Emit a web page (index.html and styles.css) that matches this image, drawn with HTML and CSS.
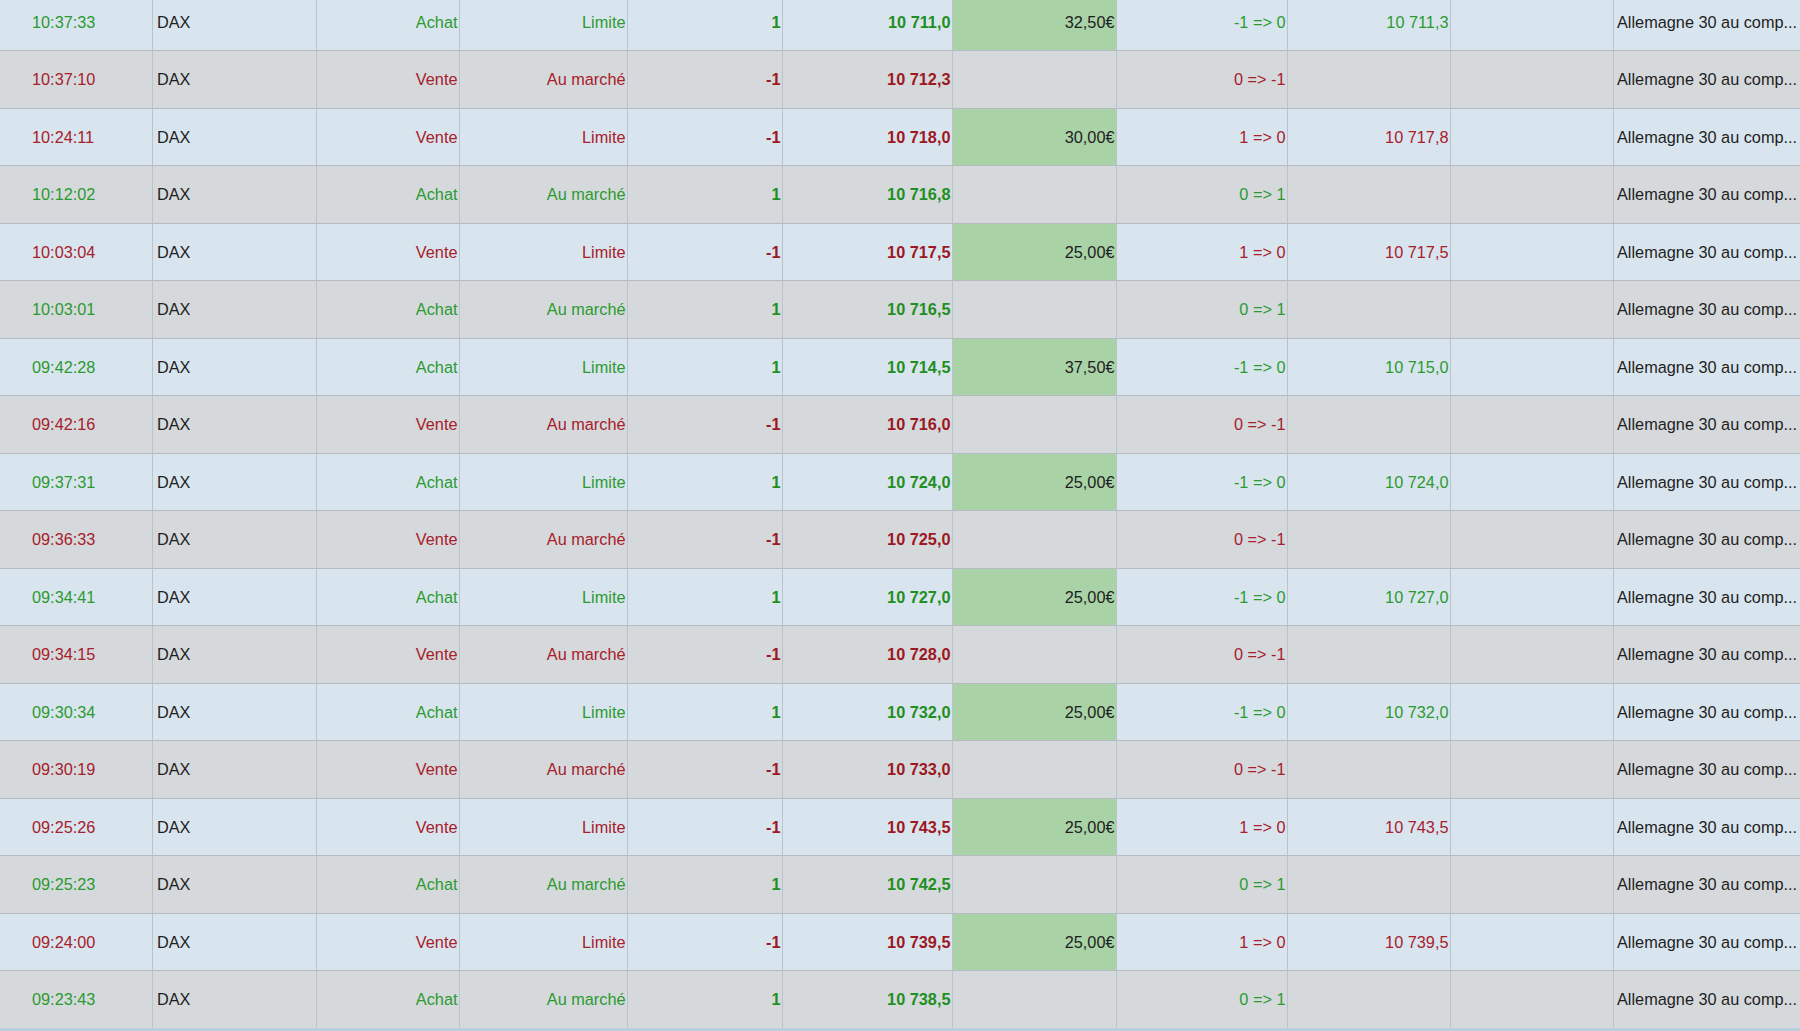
FILE: index.html
```html
<!DOCTYPE html>
<html lang="fr">
<head>
<meta charset="utf-8">
<title>Ordres DAX</title>
<link rel="stylesheet" href="styles.css">
</head>
<body>
<div class="sheet">
  <div class="grid">
    <div class="row buy"><div class="c time">10:37:33</div><div class="c sym">DAX</div><div class="c r">Achat</div><div class="c r">Limite</div><div class="c r b">1</div><div class="c r b">10 711,0</div><div class="c r pnl">32,50€</div><div class="c r">-1 =&gt; 0</div><div class="c r">10 711,3</div><div class="c"></div><div class="c desc">Allemagne 30 au comp...</div></div>
    <div class="row sell"><div class="c time">10:37:10</div><div class="c sym">DAX</div><div class="c r">Vente</div><div class="c r">Au marché</div><div class="c r b">-1</div><div class="c r b">10 712,3</div><div class="c r"></div><div class="c r">0 =&gt; -1</div><div class="c r"></div><div class="c"></div><div class="c desc">Allemagne 30 au comp...</div></div>
    <div class="row sell"><div class="c time">10:24:11</div><div class="c sym">DAX</div><div class="c r">Vente</div><div class="c r">Limite</div><div class="c r b">-1</div><div class="c r b">10 718,0</div><div class="c r pnl">30,00€</div><div class="c r">1 =&gt; 0</div><div class="c r">10 717,8</div><div class="c"></div><div class="c desc">Allemagne 30 au comp...</div></div>
    <div class="row buy"><div class="c time">10:12:02</div><div class="c sym">DAX</div><div class="c r">Achat</div><div class="c r">Au marché</div><div class="c r b">1</div><div class="c r b">10 716,8</div><div class="c r"></div><div class="c r">0 =&gt; 1</div><div class="c r"></div><div class="c"></div><div class="c desc">Allemagne 30 au comp...</div></div>
    <div class="row sell"><div class="c time">10:03:04</div><div class="c sym">DAX</div><div class="c r">Vente</div><div class="c r">Limite</div><div class="c r b">-1</div><div class="c r b">10 717,5</div><div class="c r pnl">25,00€</div><div class="c r">1 =&gt; 0</div><div class="c r">10 717,5</div><div class="c"></div><div class="c desc">Allemagne 30 au comp...</div></div>
    <div class="row buy"><div class="c time">10:03:01</div><div class="c sym">DAX</div><div class="c r">Achat</div><div class="c r">Au marché</div><div class="c r b">1</div><div class="c r b">10 716,5</div><div class="c r"></div><div class="c r">0 =&gt; 1</div><div class="c r"></div><div class="c"></div><div class="c desc">Allemagne 30 au comp...</div></div>
    <div class="row buy"><div class="c time">09:42:28</div><div class="c sym">DAX</div><div class="c r">Achat</div><div class="c r">Limite</div><div class="c r b">1</div><div class="c r b">10 714,5</div><div class="c r pnl">37,50€</div><div class="c r">-1 =&gt; 0</div><div class="c r">10 715,0</div><div class="c"></div><div class="c desc">Allemagne 30 au comp...</div></div>
    <div class="row sell"><div class="c time">09:42:16</div><div class="c sym">DAX</div><div class="c r">Vente</div><div class="c r">Au marché</div><div class="c r b">-1</div><div class="c r b">10 716,0</div><div class="c r"></div><div class="c r">0 =&gt; -1</div><div class="c r"></div><div class="c"></div><div class="c desc">Allemagne 30 au comp...</div></div>
    <div class="row buy"><div class="c time">09:37:31</div><div class="c sym">DAX</div><div class="c r">Achat</div><div class="c r">Limite</div><div class="c r b">1</div><div class="c r b">10 724,0</div><div class="c r pnl">25,00€</div><div class="c r">-1 =&gt; 0</div><div class="c r">10 724,0</div><div class="c"></div><div class="c desc">Allemagne 30 au comp...</div></div>
    <div class="row sell"><div class="c time">09:36:33</div><div class="c sym">DAX</div><div class="c r">Vente</div><div class="c r">Au marché</div><div class="c r b">-1</div><div class="c r b">10 725,0</div><div class="c r"></div><div class="c r">0 =&gt; -1</div><div class="c r"></div><div class="c"></div><div class="c desc">Allemagne 30 au comp...</div></div>
    <div class="row buy"><div class="c time">09:34:41</div><div class="c sym">DAX</div><div class="c r">Achat</div><div class="c r">Limite</div><div class="c r b">1</div><div class="c r b">10 727,0</div><div class="c r pnl">25,00€</div><div class="c r">-1 =&gt; 0</div><div class="c r">10 727,0</div><div class="c"></div><div class="c desc">Allemagne 30 au comp...</div></div>
    <div class="row sell"><div class="c time">09:34:15</div><div class="c sym">DAX</div><div class="c r">Vente</div><div class="c r">Au marché</div><div class="c r b">-1</div><div class="c r b">10 728,0</div><div class="c r"></div><div class="c r">0 =&gt; -1</div><div class="c r"></div><div class="c"></div><div class="c desc">Allemagne 30 au comp...</div></div>
    <div class="row buy"><div class="c time">09:30:34</div><div class="c sym">DAX</div><div class="c r">Achat</div><div class="c r">Limite</div><div class="c r b">1</div><div class="c r b">10 732,0</div><div class="c r pnl">25,00€</div><div class="c r">-1 =&gt; 0</div><div class="c r">10 732,0</div><div class="c"></div><div class="c desc">Allemagne 30 au comp...</div></div>
    <div class="row sell"><div class="c time">09:30:19</div><div class="c sym">DAX</div><div class="c r">Vente</div><div class="c r">Au marché</div><div class="c r b">-1</div><div class="c r b">10 733,0</div><div class="c r"></div><div class="c r">0 =&gt; -1</div><div class="c r"></div><div class="c"></div><div class="c desc">Allemagne 30 au comp...</div></div>
    <div class="row sell"><div class="c time">09:25:26</div><div class="c sym">DAX</div><div class="c r">Vente</div><div class="c r">Limite</div><div class="c r b">-1</div><div class="c r b">10 743,5</div><div class="c r pnl">25,00€</div><div class="c r">1 =&gt; 0</div><div class="c r">10 743,5</div><div class="c"></div><div class="c desc">Allemagne 30 au comp...</div></div>
    <div class="row buy"><div class="c time">09:25:23</div><div class="c sym">DAX</div><div class="c r">Achat</div><div class="c r">Au marché</div><div class="c r b">1</div><div class="c r b">10 742,5</div><div class="c r"></div><div class="c r">0 =&gt; 1</div><div class="c r"></div><div class="c"></div><div class="c desc">Allemagne 30 au comp...</div></div>
    <div class="row sell"><div class="c time">09:24:00</div><div class="c sym">DAX</div><div class="c r">Vente</div><div class="c r">Limite</div><div class="c r b">-1</div><div class="c r b">10 739,5</div><div class="c r pnl">25,00€</div><div class="c r">1 =&gt; 0</div><div class="c r">10 739,5</div><div class="c"></div><div class="c desc">Allemagne 30 au comp...</div></div>
    <div class="row buy"><div class="c time">09:23:43</div><div class="c sym">DAX</div><div class="c r">Achat</div><div class="c r">Au marché</div><div class="c r b">1</div><div class="c r b">10 738,5</div><div class="c r"></div><div class="c r">0 =&gt; 1</div><div class="c r"></div><div class="c"></div><div class="c desc">Allemagne 30 au comp...</div></div>
  </div>
</div>
</body>
</html>
```

FILE: styles.css
```css
html, body {
  margin: 0;
  padding: 0;
  width: 1800px;
  height: 1031px;
  overflow: hidden;
  background: #bccddb;
}

.sheet {
  width: 1800px;
  height: 1028px;
  overflow: hidden;
  font-family: "Liberation Sans", Arial, sans-serif;
  font-size: 16.3px;
  color: #1e1e1e;
}

.grid {
  margin-top: -6.5px;
  display: flex;
  flex-direction: column;
}

.row {
  display: grid;
  grid-template-columns: 153px 164px 143px 168px 155px 170px 164px 171px 163px 163px 186px;
  height: 57.5px;
  background: #d9e5ee;
}

.row:nth-child(even) {
  background: #d5d9dc;
}

.c {
  box-sizing: border-box;
  border-right: 1px solid #bcc2c7;
  border-bottom: 1px solid #b5bbc0;
  display: flex;
  align-items: center;
  padding: 1px 3px 0 3px;
  white-space: nowrap;
  overflow: hidden;
}

.c:last-child {
  border-right: none;
}

.r {
  justify-content: flex-end;
  padding-right: 1.5px;
}

.time {
  padding-left: 32px;
}

.sym {
  padding-left: 4px;
  color: #1e1e1e;
}

.desc {
  padding-left: 3px;
  color: #1e1e1e;
}

.b {
  font-weight: bold;
}

.pnl {
  background: #a9d3a6;
  color: #1e1e1e;
}

.buy .time,
.buy .r {
  color: #2c9a30;
}

.sell .time,
.sell .r {
  color: #a7202b;
}

.buy .b {
  color: #1f8f22;
}

.sell .b {
  color: #9c1822;
}

.row .pnl {
  color: #1e1e1e;
}
```
